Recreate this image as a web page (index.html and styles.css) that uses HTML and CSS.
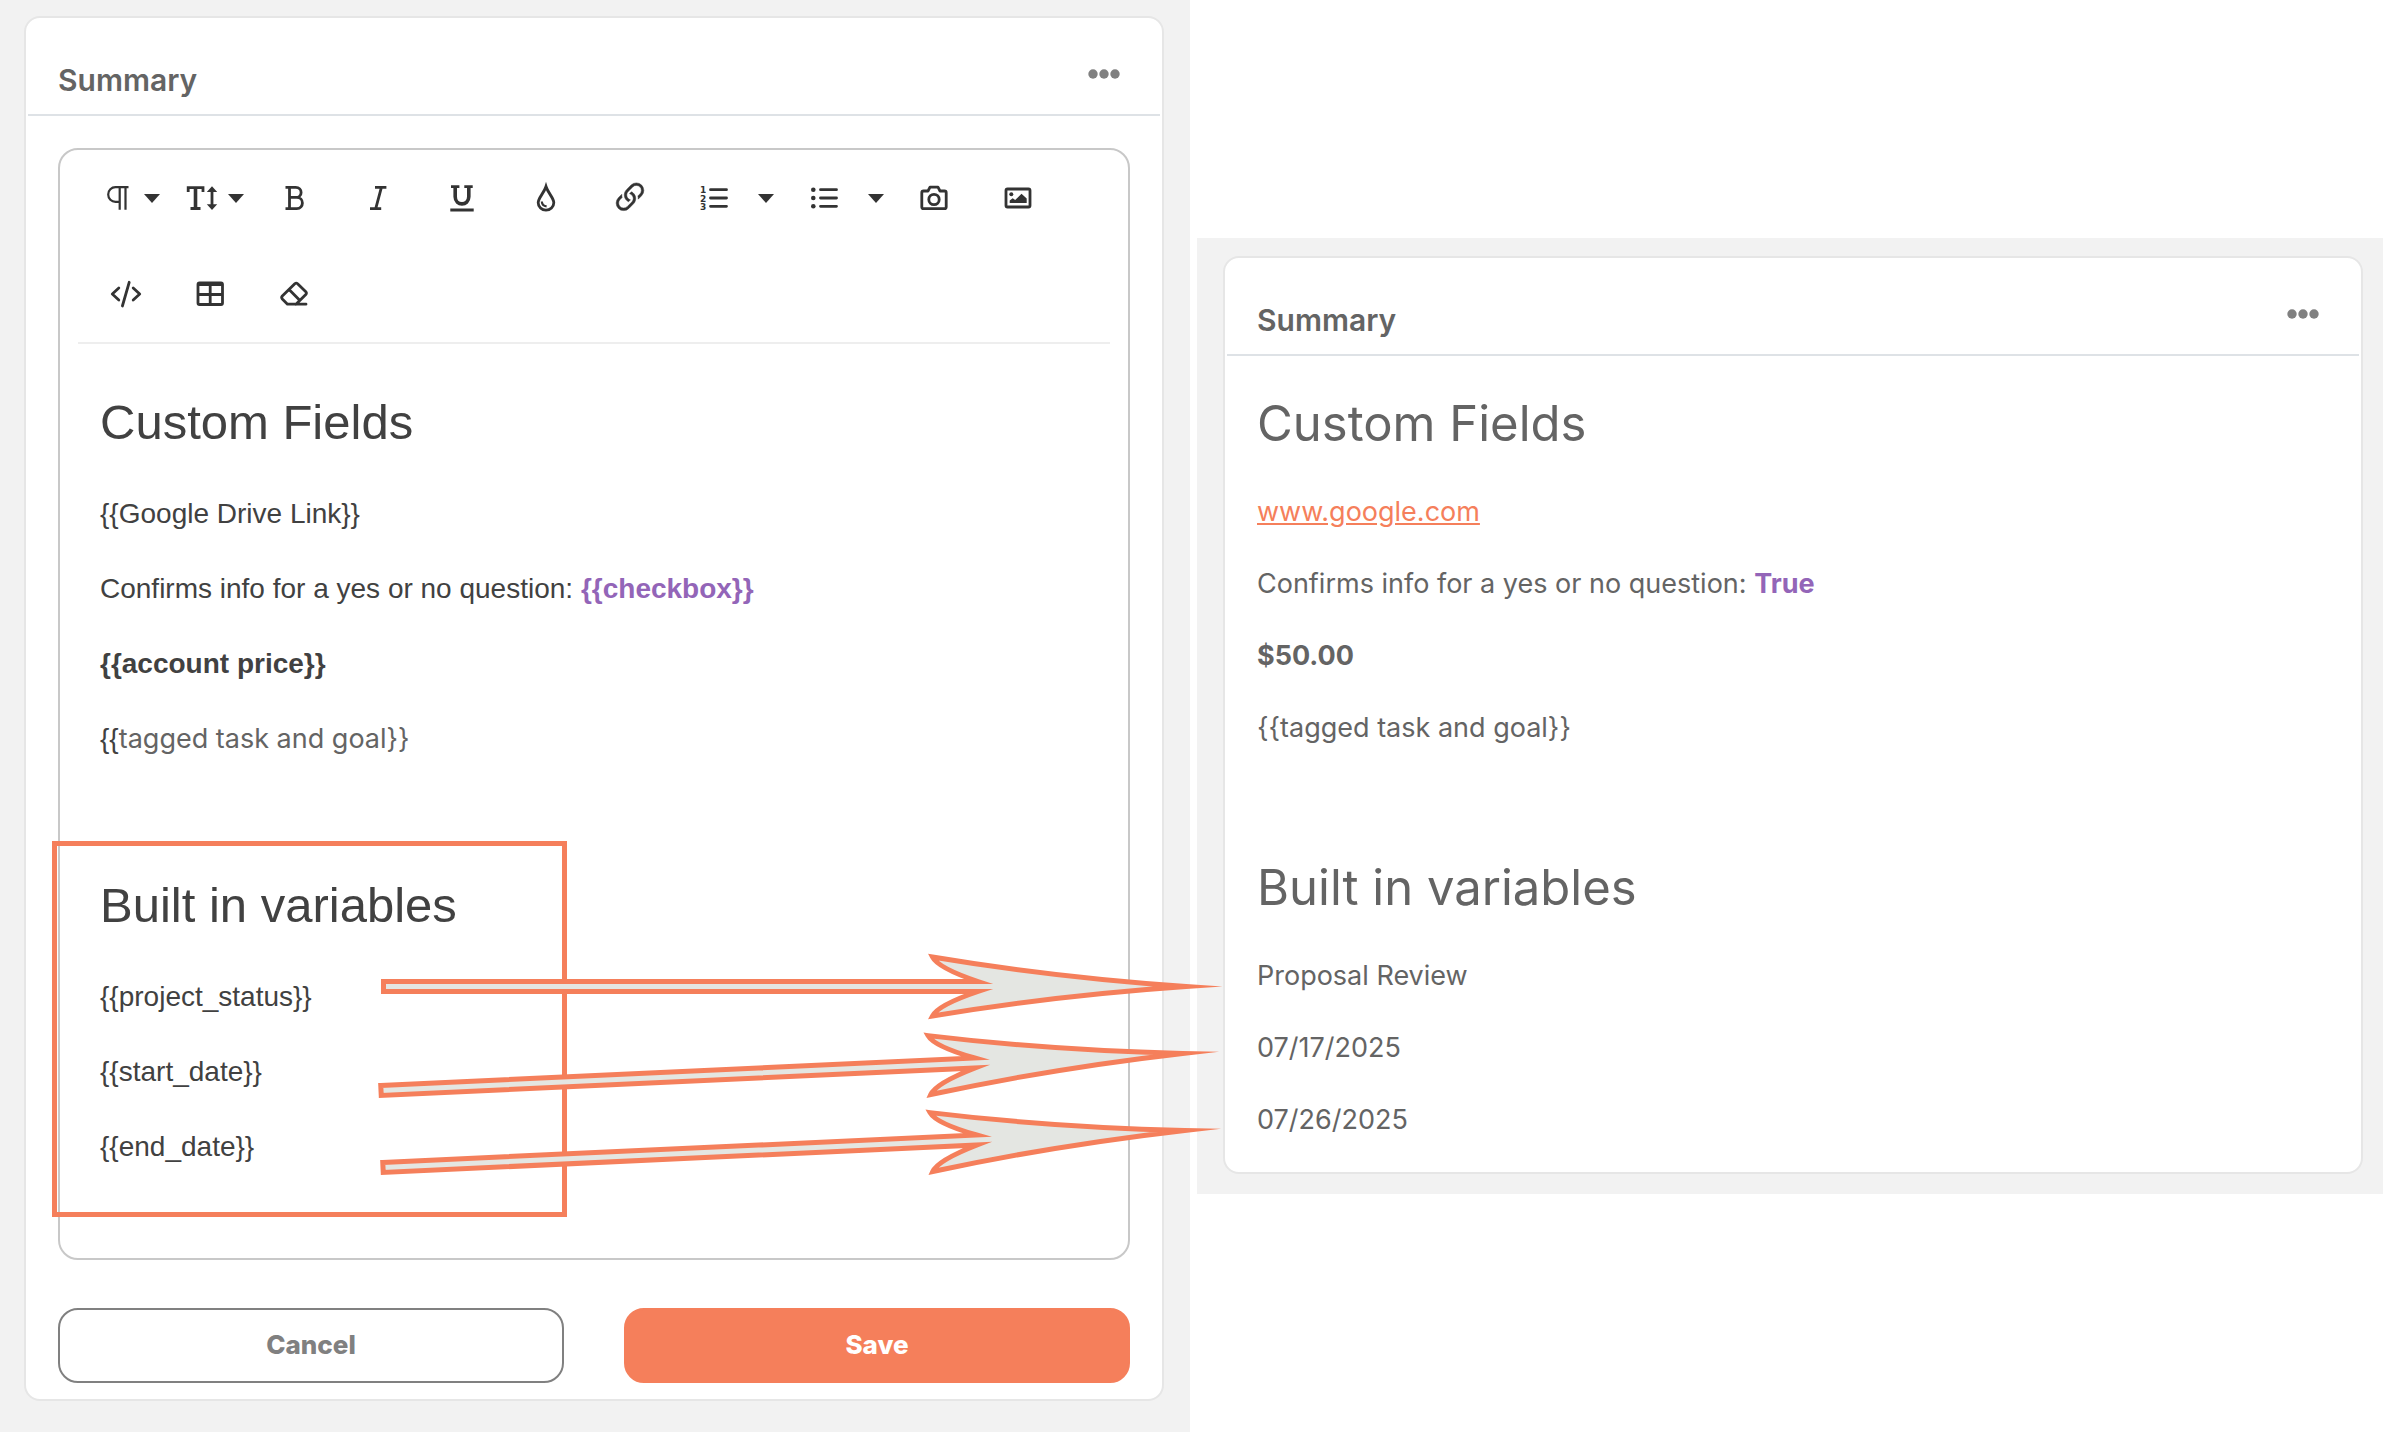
FILE: index.html
```html
<!DOCTYPE html>
<html lang="en">
<head>
  <meta charset="UTF-8">
  <meta name="viewport" content="width=device-width, initial-scale=1.0">
  <link rel="stylesheet" href="styles.css">
  <title>Summary</title>
</head>
<body>
  <div class="page">
    <section class="panel panel-edit">
      <div class="card">
        <header class="card-header">
          <h2>Summary</h2>
          <button type="button" class="menu" aria-label="More options">
            <svg viewBox="0 0 32 10"><circle cx="5" cy="5" r="4.7"/><circle cx="16" cy="5" r="4.7"/><circle cx="27" cy="5" r="4.7"/></svg>
          </button>
        </header>
        <div class="editor">
          <div class="toolbar">
            <button type="button" class="tool tool-drop" aria-label="Paragraph format">
              <svg class="icon" viewBox="0 0 40 40"><path class="line thin" d="M30.5 9.2H17.5a7.3 7.3 0 0 0 0 14.6h4M21.7 9v22.7M27.5 9v22.7"/></svg>
              <svg class="caret" viewBox="0 0 16 9"><path d="M0 0h16L8 9z"/></svg>
            </button>
            <button type="button" class="tool tool-drop" aria-label="Font size">
              <svg class="icon" viewBox="0 0 40 40"><path class="line" d="M6.2 14V9.7h14.8V14M8.5 30.5h10M30 12v16"/><path class="line thick" d="M13.5 9.7v21"/><path d="M30 8.3l5.2 5.7H24.8zM30 32l5.2-5.7H24.8z"/></svg>
              <svg class="caret" viewBox="0 0 16 9"><path d="M0 0h16L8 9z"/></svg>
            </button>
            <button type="button" class="tool" aria-label="Bold">
              <svg class="icon" viewBox="0 0 40 40"><path class="line" d="M11.5 9.4h10.2c7.2 0 7.2 10 0 10h-6 7c7.6 0 7.6 11.2 0 11.2H11.5M15.5 9.4v21"/></svg>
            </button>
            <button type="button" class="tool" aria-label="Italic">
              <svg class="icon" viewBox="0 0 40 40"><path class="line" d="M17 9.4h11.4M12 30.6h11.2M23.4 9.4l-5.6 21"/></svg>
            </button>
            <button type="button" class="tool" aria-label="Underline">
              <svg class="icon" viewBox="0 0 40 40"><path class="line" d="M9 8.6h8.4M22.3 8.6h8.4M8.3 32h23.4"/><path class="line thick" d="M13.2 8.6v10.2c0 9.4 13.6 9.4 13.6 0V8.6"/></svg>
            </button>
            <button type="button" class="tool" aria-label="Text color">
              <svg class="icon" viewBox="0 0 40 40"><path class="line" d="M20 8.5c-2 6.5-7.8 11.5-7.8 16.2a7.8 7.5 0 0 0 15.6 0c0-4.7-5.8-9.7-7.8-16.2z"/><path class="line thin" d="M15.8 23.5c.2 2.7 2 4.6 4.8 4.9"/></svg>
            </button>
            <button type="button" class="tool" aria-label="Insert link">
              <svg class="icon icon-link" viewBox="0 0 16 16"><path d="M4.715 6.542 3.343 7.914a3 3 0 1 0 4.243 4.243l1.828-1.829A3 3 0 0 0 8.586 5.5L8 6.086a1 1 0 0 0-.154.199 2 2 0 0 1 .861 3.337L6.88 11.45a2 2 0 1 1-2.83-2.83l.793-.792a4 4 0 0 1-.128-1.287z"/><path d="M6.586 4.672A3 3 0 0 0 7.414 9.5l.775-.776a2 2 0 0 1-.896-3.346L9.12 3.55a2 2 0 1 1 2.83 2.83l-.793.792c.112.42.155.855.128 1.287l1.372-1.372a3 3 0 1 0-4.243-4.243z"/></svg>
            </button>
            <button type="button" class="tool" aria-label="Ordered list">
              <svg class="icon" viewBox="0 0 40 40"><path class="line round" d="M16.5 11.7h16M16.5 20h16M16.5 28.3h16"/><text x="6" y="15">1</text><text x="6" y="23.5">2</text><text x="6" y="32">3</text></svg>
            </button>
            <button type="button" class="tool-more" aria-label="Ordered list style">
              <svg class="caret" viewBox="0 0 16 9"><path d="M0 0h16L8 9z"/></svg>
            </button>
            <button type="button" class="tool" aria-label="Unordered list">
              <svg class="icon" viewBox="0 0 40 40"><path class="line round" d="M16.5 11.7h16M16.5 20h16M16.5 28.3h16"/><circle cx="9.3" cy="11.7" r="2.3"/><circle cx="9.3" cy="20" r="2.3"/><circle cx="9.3" cy="28.3" r="2.3"/></svg>
            </button>
            <button type="button" class="tool-more" aria-label="Unordered list style">
              <svg class="caret" viewBox="0 0 16 9"><path d="M0 0h16L8 9z"/></svg>
            </button>
            <button type="button" class="tool" aria-label="Take photo">
              <svg class="icon" viewBox="0 0 40 40"><path class="line round" d="M9.5 13H14l2-3.8h8l2 3.8h4.5q1.7 0 1.7 1.7V29q0 1.7-1.7 1.7h-21q-1.7 0-1.7-1.7V14.7q0-1.7 1.7-1.7z"/><circle class="line" cx="20" cy="21.5" r="5.2"/></svg>
            </button>
            <button type="button" class="tool" aria-label="Insert image">
              <svg class="icon" viewBox="0 0 40 40"><rect class="line" x="8" y="11" width="24" height="18" rx="1.5"/><circle cx="13.3" cy="16.3" r="2"/><path d="M11.7 25v-2.5l3-2.3 2.5 1.8 6.3-6.3 5.2 4.8V25z"/></svg>
            </button>
            <button type="button" class="tool" aria-label="Code view">
              <svg class="icon" viewBox="0 0 40 40"><path class="line round" d="M12.8 14L6.3 20l6.5 6M27.2 14l6.5 6-6.5 6M23.2 8.3L16.4 32"/></svg>
            </button>
            <button type="button" class="tool" aria-label="Insert table">
              <svg class="icon" viewBox="0 0 40 40"><rect class="line" x="8" y="9" width="24.5" height="21.5" rx="1.5"/><path class="line" d="M8 10.5h24M8 20.5h24M20.2 10v20"/></svg>
            </button>
            <button type="button" class="tool" aria-label="Clear formatting">
              <svg class="icon" viewBox="0 0 40 40"><path class="line round" d="M32 30.2H13.5L8.3 25q-1.3-1.5 0-3L20.8 9.7q1.4-1.2 2.8 0l8.2 8q1.2 1.4 0 2.8L22 30.2M15.3 15.7l10.4 10.6"/></svg>
            </button>
          </div>
          <div class="content">
            <h1>Custom Fields</h1>
            <p>{{Google Drive Link}}</p>
            <p>Confirms info for a yes or no question: <strong class="purple">{{checkbox}}</strong></p>
            <p><strong>{{account price}}</strong></p>
            <p>{{<span class="muted">tagged task and goal}}</span></p>
            <p><br></p>
            <h1>Built in variables</h1>
            <p>{{project_status}}</p>
            <p>{{start_date}}</p>
            <p>{{end_date}}</p>
          </div>
        </div>
        <div class="actions">
          <button type="button" class="btn btn-cancel">Cancel</button>
          <button type="button" class="btn btn-save">Save</button>
        </div>
      </div>
    </section>
    <section class="panel panel-view">
      <div class="card">
        <header class="card-header">
          <h2>Summary</h2>
          <button type="button" class="menu" aria-label="More options">
            <svg viewBox="0 0 32 10"><circle cx="5" cy="5" r="4.7"/><circle cx="16" cy="5" r="4.7"/><circle cx="27" cy="5" r="4.7"/></svg>
          </button>
        </header>
        <div class="preview">
          <h1>Custom Fields</h1>
          <p><a href="#">www.google.com</a></p>
          <p>Confirms info for a yes or no question: <strong class="purple">True</strong></p>
          <p><strong>$50.00</strong></p>
          <p>{{tagged task and goal}}</p>
          <p><br></p>
          <h1>Built in variables</h1>
          <p>Proposal Review</p>
          <p>07/17/2025</p>
          <p>07/26/2025</p>
        </div>
      </div>
    </section>
    <svg class="notes" viewBox="0 0 2383 1432">
      <defs>
        <path id="arrow" d="M2.5 -5H597Q557 -18.5 551.5 -29.5Q674 -9 805 0Q674 9 551.5 29.5Q557 18.5 597 5H2.5Z"/>
      </defs>
      <rect class="box" x="54.5" y="843.5" width="510" height="371"/>
      <use href="#arrow" transform="translate(381 986.5)"/>
      <use href="#arrow" transform="translate(378.5 1090.5) rotate(-2.64)"/>
      <use href="#arrow" transform="translate(380.5 1167.5) rotate(-2.64)"/>
    </svg>
  </div>
</body>
</html>
```
FILE: styles.css
```css
* {
  box-sizing: border-box;
}
body {
  margin: 0;
  background: #fff;
  font-family: Inter, sans-serif;
  color: #646464;
}
.page {
  position: relative;
  display: grid;
  grid-template-columns: 1190fr 1186fr;
  gap: 7px;
  align-items: start;
}
.panel {
  background: #f2f2f2;
}
.panel-edit {
  min-height: 100vh;
  padding: 16px 26px 31px 24px;
}
.panel-view {
  margin-top: 238px;
  padding: 18px 20px 20px 26px;
}
.card {
  background: #fff;
  border: 2px solid #e6e6e6;
  border-radius: 16px;
}
.card-header {
  display: flex;
  justify-content: space-between;
  align-items: flex-start;
  height: 98px;
  margin: 0 2px;
  padding: 42px 40px 0 30px;
  border-bottom: 2px solid #dee2e6;
}
.card-header h2 {
  margin: 0;
  font-size: 30px;
  line-height: 40px;
  font-weight: 600;
}
.menu {
  display: flex;
  margin-top: 9px;
  padding: 0;
  border: none;
  background: none;
}
.menu svg {
  width: 32px;
  height: 10px;
  fill: #808080;
}
.editor {
  margin: 32px 32px 0;
  border: 2px solid #c8c8c8;
  border-radius: 20px;
}

/* toolbar */
.toolbar {
  display: flex;
  flex-wrap: wrap;
  margin: 0 18px;
  padding-left: 6px;
  border-bottom: 2px solid #eee;
}
.tool,
.tool-more {
  display: flex;
  align-items: center;
  justify-content: center;
  width: 84px;
  height: 96px;
  padding: 0;
  border: none;
  background: none;
}
.tool-drop {
  justify-content: flex-start;
  gap: 6px;
  padding-left: 14px;
}
.tool-more {
  width: 26px;
  padding-right: 6px;
}
.icon {
  width: 40px;
  height: 40px;
  fill: #333;
}
.icon text {
  font-family: "DejaVu Sans", sans-serif;
  font-size: 9px;
  font-weight: 700;
}
.icon-link {
  stroke: #333;
  stroke-width: 0.2;
}
.caret {
  flex: none;
  width: 16px;
  height: 9px;
  fill: #333;
}
.line {
  fill: none;
  stroke: #333;
  stroke-width: 2.8;
}
.thin {
  stroke-width: 2.2;
}
.thick {
  stroke-width: 3.6;
}
.round {
  stroke-linecap: round;
  stroke-linejoin: round;
}

/* text */
.content {
  min-height: 914px;
  padding: 40px 40px 0;
  font-family: "Liberation Sans", Arial, sans-serif;
  color: #414141;
}
.content h1,
.preview h1 {
  margin: 0 0 32px;
  font-size: 49px;
  line-height: 76px;
  font-weight: 400;
}
.content p {
  margin: 0 0 32px;
  font-size: 28px;
  line-height: 43px;
}
.content p:last-child {
  margin-bottom: 0;
}
.preview {
  padding: 32px 32px 0;
}
.preview h1 {
  line-height: 72px;
}
.preview p {
  margin: 0 0 32px;
  font-size: 27px;
  line-height: 40px;
}
.preview a {
  color: #f57f5b;
}
.purple {
  color: #9365b8;
}
.muted {
  font-family: Inter, sans-serif;
  font-size: 27px;
  line-height: 40px;
  color: #646464;
}

.actions {
  display: flex;
  gap: 60px;
  margin: 48px 32px 16px;
}
.btn {
  flex: 1;
  height: 75px;
  padding: 0 0 2px;
  border: 2px solid #808080;
  border-radius: 20px;
  background: #fff;
  color: #808080;
  font-family: Inter, sans-serif;
  font-size: 26px;
  font-weight: 800;
}
.btn-save {
  border-color: #f57f5b;
  background: #f57f5b;
  color: #fff;
}

/* highlight box and arrows drawn over both panels */
.notes {
  position: absolute;
  top: 0;
  left: 0;
  width: 100%;
  pointer-events: none;
  fill: #e4e6e2;
  stroke: #f57f5b;
  stroke-width: 5;
  stroke-miterlimit: 20;
}
.box {
  fill: none;
}
```
